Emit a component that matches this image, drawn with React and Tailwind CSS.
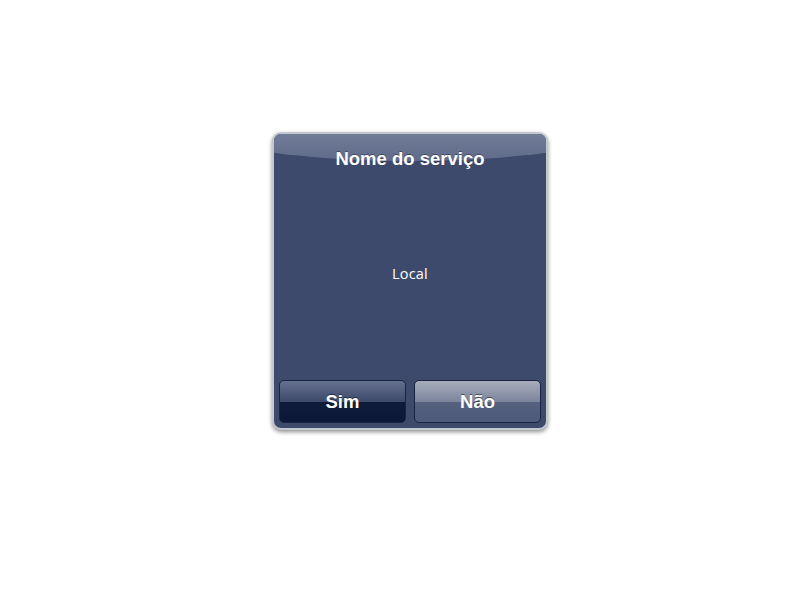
export default function App() {
  return (
    <div className="w-[800px] h-[600px] bg-white pt-[132px] pl-[272px]">
      <div className="w-[276px] h-[298px] rounded-[9px] border-2 border-[#c3c7d0] bg-[#3d4a6b] shadow-[0_2px_4px_rgba(0,0,0,0.45)] overflow-hidden flex flex-col relative">
        <div className="absolute left-[-70px] right-[-70px] top-[-40px] h-[67px] rounded-b-[50%] bg-gradient-to-b from-[#8c95ab] to-[#5f6b89]" />
        <div className="relative h-[50px] flex items-center justify-center">
          <span className="text-white font-bold text-[18.5px] font-['Liberation_Sans',Arial,sans-serif] [text-shadow:0_-1px_0_rgba(0,0,0,0.35)]">
            Nome do serviço
          </span>
        </div>
        <div className="flex-1 flex items-center justify-center pb-[16px]">
          <span className="text-white text-[14.5px] font-['Open_Sans',sans-serif] font-normal tracking-[0.2px]">Local</span>
        </div>
        <div className="flex gap-[8px] px-[5px] pb-[5px]">
          <button className="flex-1 h-[43px] rounded-[5px] border border-[#1a2442] bg-[linear-gradient(to_bottom,#66718f_0%,#3e4a6a_50%,#0f1b3c_50%,#0c1837_100%)] flex items-center justify-center pt-[1px]">
            <span className="text-white font-bold text-[18.5px] font-['Liberation_Sans',Arial,sans-serif] [text-shadow:0_-1px_0_rgba(0,0,0,0.5)]">Sim</span>
          </button>
          <button className="flex-1 h-[43px] rounded-[5px] border border-[#1a2442] bg-[linear-gradient(to_bottom,#a7adbc_0%,#7c859d_50%,#56617f_50%,#4e5a7a_100%)] flex items-center justify-center pt-[1px]">
            <span className="text-white font-bold text-[18.5px] font-['Liberation_Sans',Arial,sans-serif] [text-shadow:0_-1px_0_rgba(0,0,0,0.5)]">Não</span>
          </button>
        </div>
      </div>
    </div>
  );
}
